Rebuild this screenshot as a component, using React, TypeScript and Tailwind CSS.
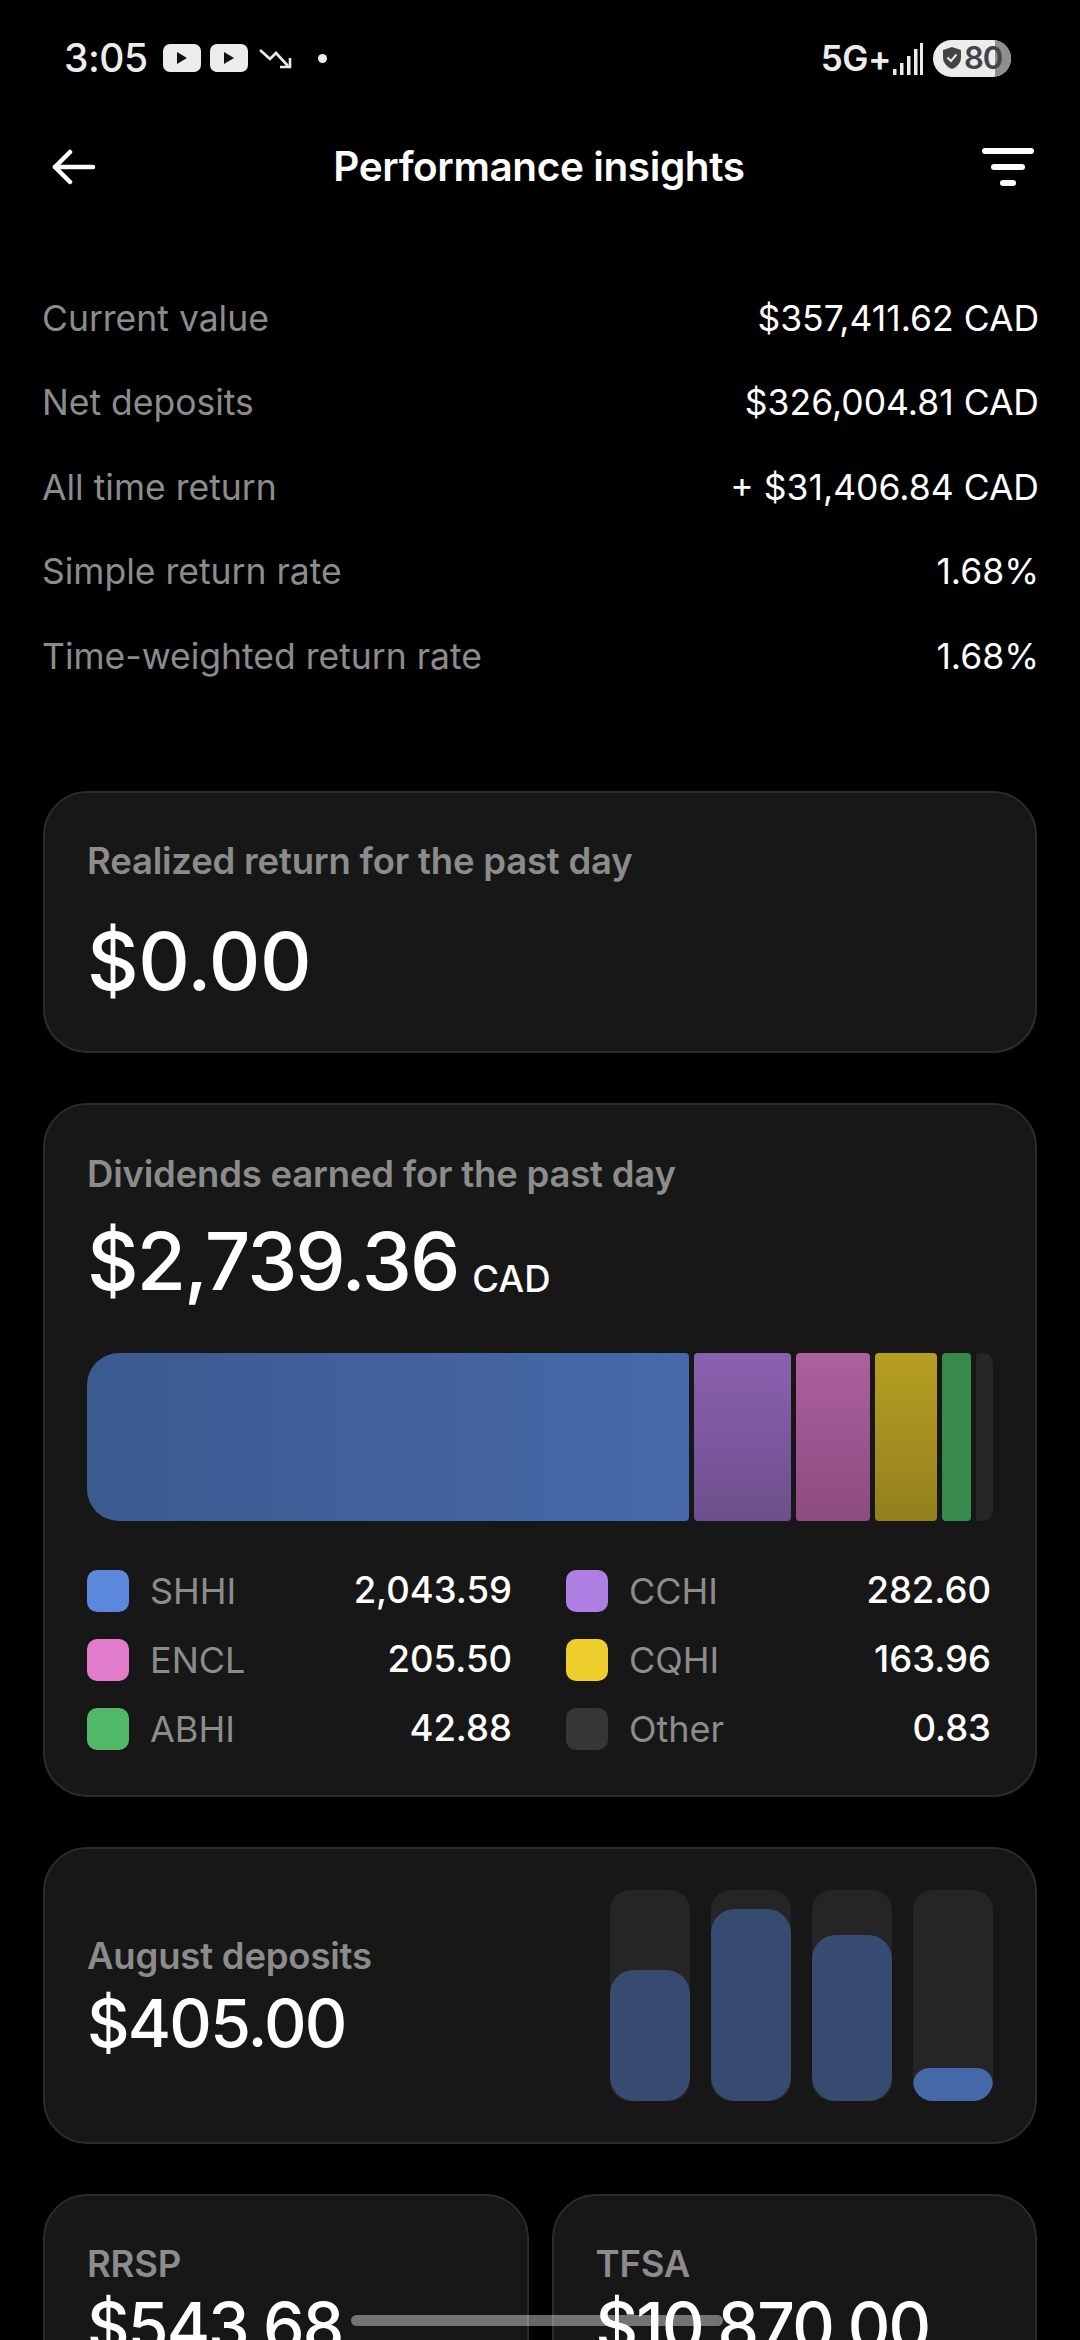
const font = { fontFamily: "Inter, 'Liberation Sans', sans-serif" };

const rows = [
  ["Current value", "$357,411.62 CAD"],
  ["Net deposits", "$326,004.81 CAD"],
  ["All time return", "+ $31,406.84 CAD"],
  ["Simple return rate", "1.68%"],
  ["Time-weighted return rate", "1.68%"],
];

const legend = [
  { name: "SHHI", value: "2,043.59", color: "bg-[#5b88dc]" },
  { name: "CCHI", value: "282.60", color: "bg-[#ad7fe3]" },
  { name: "ENCL", value: "205.50", color: "bg-[#e27dcb]" },
  { name: "CQHI", value: "163.96", color: "bg-[#eece2c]" },
  { name: "ABHI", value: "42.88", color: "bg-[#50b868]" },
  { name: "Other", value: "0.83", color: "bg-[#363636]" },
];

const bars = [131, 192, 166, 33];

function PlayBadge() {
  return (
    <div className="flex h-[28px] w-[38px] items-center justify-center rounded-[7px] bg-[#ececec]">
      <svg width="12" height="14" viewBox="0 0 12 14">
        <path d="M1 1 L11 7 L1 13 Z" fill="#111" />
      </svg>
    </div>
  );
}

function StatusBar() {
  return (
    <div className="flex h-[116px] items-center justify-between pl-[64px] pr-[69px] text-[#ececec]">
      <div className="flex items-center">
        <span className="text-[39px] font-medium tracking-[-0.5px]">3:05</span>
        <div className="ml-[15px] flex gap-[9px]">
          <PlayBadge />
          <PlayBadge />
        </div>
        <svg className="ml-[11px] mt-[2px]" width="34" height="26" viewBox="0 0 34 26" fill="none" stroke="#ececec" strokeWidth="2.6">
          <path d="M1 4 L11 13 L17 7 L29 20" />
          <path d="M21 21 H31 V12" />
        </svg>
        <div className="ml-[25px] h-[9px] w-[9px] rounded-full bg-[#ececec]" />
      </div>
      <div className="flex items-center">
        <span className="text-[35px] font-semibold tracking-[-0.5px]">5G+</span>
        <svg className="ml-[1px] mt-[2px]" width="32" height="34" viewBox="0 0 32 34" fill="#ececec">
          <rect x="1" y="27" width="3.5" height="6" />
          <rect x="8" y="21" width="3.5" height="12" />
          <rect x="15" y="14" width="3.5" height="19" />
          <rect x="22" y="7" width="3.5" height="26" />
          <rect x="28" y="1" width="3" height="32" />
        </svg>
        <div className="relative ml-[9px] flex h-[37px] w-[78px] items-center overflow-hidden rounded-full bg-[#ececec] pl-[9px]">
          <div className="absolute right-0 top-0 h-full w-[16px] bg-[#8e8e8e]" />
          <svg className="relative" width="20" height="24" viewBox="0 0 20 24">
            <path d="M10 1 L19 4 V11 C19 17 15 21 10 23 C5 21 1 17 1 11 V4 Z" fill="#444" />
            <path d="M5.5 11.5 L9 15 L14.5 8.5" fill="none" stroke="#ececec" strokeWidth="2" />
          </svg>
          <span className="relative ml-[2px] text-[31px] font-semibold tracking-[-1px] text-[#444]">80</span>
        </div>
      </div>
    </div>
  );
}

function NavBar() {
  return (
    <div className="flex h-[102px] items-center justify-between pl-[52px] pr-[46px]">
      <svg width="44" height="36" viewBox="0 0 44 36" fill="none" stroke="#fff" strokeWidth="4.5" strokeLinecap="round" strokeLinejoin="round">
        <path d="M3 18 H41" />
        <path d="M18 3 L3 18 L18 33" />
      </svg>
      <h1 className="text-[40.5px] font-semibold tracking-[-0.4px] text-white">Performance insights</h1>
      <div className="flex w-[52px] flex-col items-center gap-[10px]">
        <div className="h-[6px] w-[52px] rounded-full bg-white" />
        <div className="h-[6px] w-[34px] rounded-full bg-white" />
        <div className="h-[6px] w-[16px] rounded-full bg-white" />
      </div>
    </div>
  );
}

function Card({ className, children }: { className?: string; children: React.ReactNode }) {
  return (
    <div className={"rounded-[44px] border-2 border-[#2c2c2c] bg-[#171717] " + (className ?? "")}>{children}</div>
  );
}

export default function App() {
  return (
    <div className="relative h-[2340px] w-[1080px] overflow-hidden bg-black" style={font}>
      <StatusBar />
      <NavBar />

      <div className="mt-[58px] pl-[42px] pr-[41px]">
        {rows.map(([label, value]) => (
          <div key={label} className="flex h-[84.5px] items-center justify-between text-[35.5px]">
            <span className="text-[#8c8c8c]">{label}</span>
            <span className="text-white">{value}</span>
          </div>
        ))}
      </div>

      <div className="mt-[92px] flex flex-col gap-[50px] px-[43px]">
        <Card className="h-[262px] px-[42px] pt-[48px]">
          <div className="text-[36.5px] font-semibold leading-[40px] tracking-[-0.2px] text-[#8c8c8c]">
            Realized return for the past day
          </div>
          <div className="mt-[33px] text-[80px] font-medium leading-[94px] tracking-[-0.5px] text-white">$0.00</div>
        </Card>

        <Card className="h-[694px] px-[42px] pt-[49px]">
          <div className="text-[36.5px] font-semibold leading-[40px] tracking-[-0.2px] text-[#8c8c8c]">
            Dividends earned for the past day
          </div>
          <div className="mt-[20px] flex items-baseline text-white">
            <span className="text-[80px] font-medium leading-[94px] tracking-[-2px]">$2,739.36</span>
            <span className="ml-[14px] translate-y-[2px] text-[36.5px] font-medium">CAD</span>
          </div>

          <div className="mt-[45px] flex h-[168px] gap-[5px]">
            <div className="w-[602px] rounded-[4px] rounded-l-[32px] bg-gradient-to-r from-[#3a5a90] to-[#4769a9]" />
            <div className="w-[97px] rounded-[4px] bg-gradient-to-b from-[#8a61b0] to-[#6e4e8c]" />
            <div className="w-[74px] rounded-[4px] bg-gradient-to-b from-[#ad609f] to-[#8b4c7f]" />
            <div className="w-[62px] rounded-[4px] bg-gradient-to-b from-[#b79f23] to-[#93801c]" />
            <div className="w-[29px] rounded-[4px] bg-[#38894c]" />
            <div className="w-[17px] rounded-[4px] rounded-r-[10px] bg-[#262626]" />
          </div>

          <div className="mt-[49px] grid grid-cols-[425px_1fr] gap-y-[27px] pr-[2px]">
            {legend.map((item, i) => (
              <div key={item.name} className={"flex h-[42px] items-center " + (i % 2 === 0 ? "w-[425px]" : "w-full pl-[54px]")}>
                <div className={"h-[42px] w-[42px] rounded-[10px] " + item.color} />
                <span className="ml-[21px] text-[36px] text-[#8c8c8c]">{item.name}</span>
                <span className="ml-auto text-[36.5px] font-medium text-white">{item.value}</span>
              </div>
            ))}
          </div>
        </Card>

        <Card className="flex h-[297px] items-center justify-between pl-[42px] pr-[42px]">
          <div className="pt-[6px]">
            <div className="text-[36.5px] font-semibold leading-[40px] tracking-[-0.2px] text-[#8c8c8c]">August deposits</div>
            <div className="mt-[9px] text-[66px] font-medium leading-[76px] tracking-[-1.8px] text-white">$405.00</div>
          </div>
          <div className="flex h-[211px] gap-[21px]">
            {bars.map((h, i) => (
              <div key={i} className="relative h-full w-[80px] overflow-hidden rounded-[20px] bg-[#252525]">
                <div
                  className={"absolute bottom-0 left-0 w-full rounded-[24px] " + (i === 3 ? "bg-[#4468a8]" : "bg-[#374b70]")}
                  style={{ height: h }}
                />
              </div>
            ))}
          </div>
        </Card>

        <div className="grid grid-cols-2 gap-[23px]">
          <Card className="h-[300px] px-[42px] pt-[48px]">
            <div className="text-[36.5px] font-semibold leading-[40px] tracking-[-0.2px] text-[#8c8c8c]">RRSP</div>
            <div className="mt-[4px] text-[66px] font-medium leading-[76px] tracking-[-1.8px] text-white">$543.68</div>
          </Card>
          <Card className="h-[300px] px-[42px] pt-[48px]">
            <div className="text-[36.5px] font-semibold leading-[40px] tracking-[-0.2px] text-[#8c8c8c]">TFSA</div>
            <div className="mt-[4px] text-[66px] font-medium leading-[76px] tracking-[-1.8px] text-white">$10,870.00</div>
          </Card>
        </div>
      </div>

      <div className="absolute bottom-[14px] left-[351px] h-[11px] w-[372px] rounded-full bg-white/40" />
    </div>
  );
}
